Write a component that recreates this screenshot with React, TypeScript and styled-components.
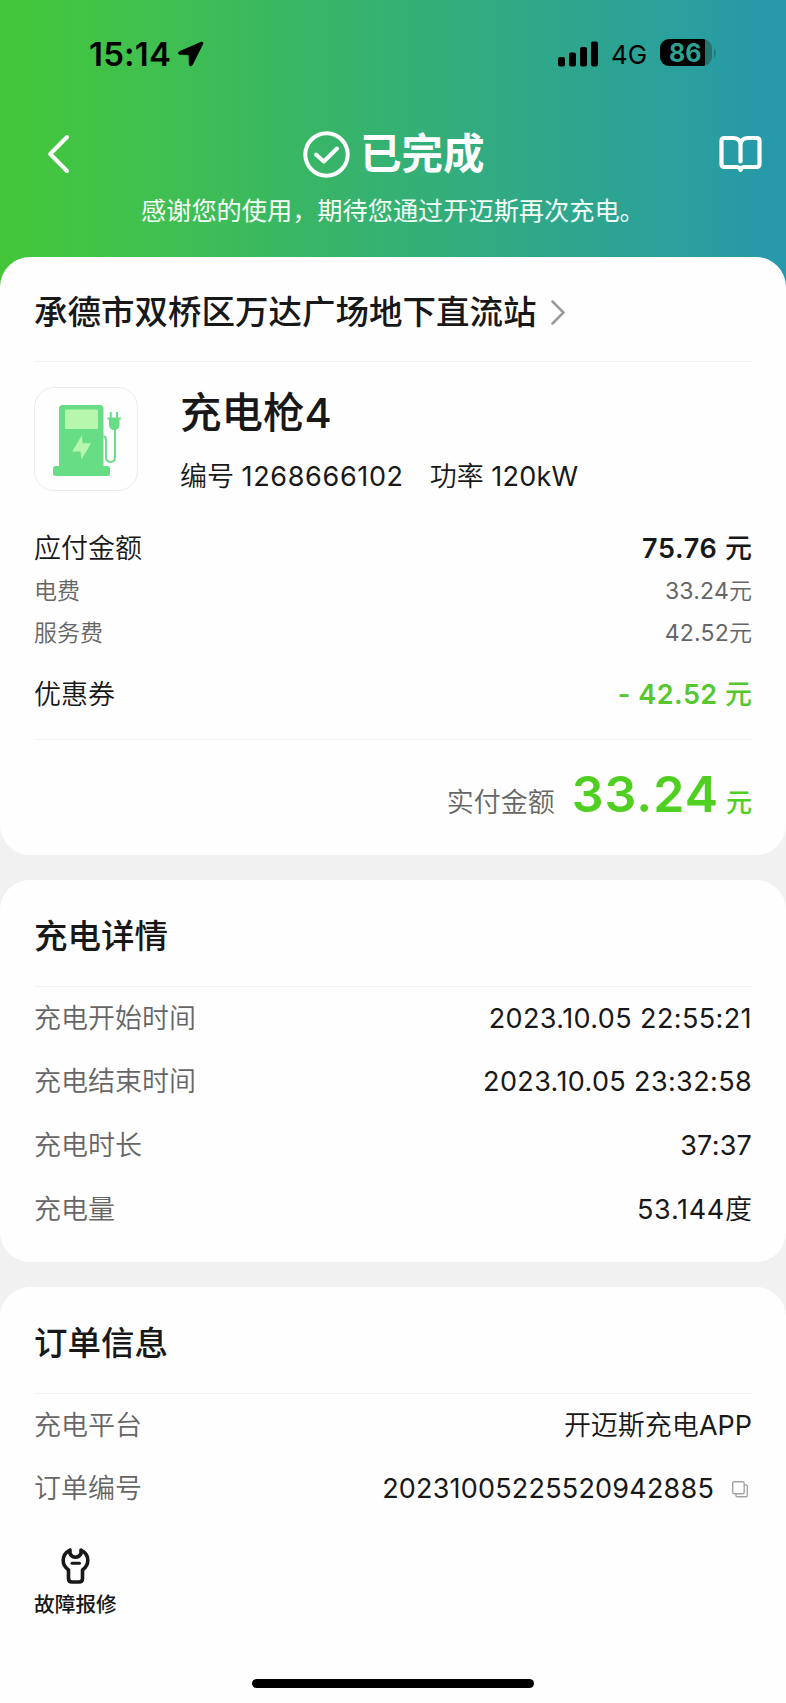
import React from "react";
import styled, { createGlobalStyle } from "styled-components";

const GlobalStyle = createGlobalStyle`
  * { box-sizing: border-box; }
  body {
    margin: 0;
    background: #f1f1f1;
    color: #181818;
    font-family: Inter, "Noto Sans CJK SC", sans-serif;
    font-size: 26px;
  }
  svg { display: block; flex: none; }
`;

const Screen = styled.div`
  width: 786px;
  height: 1703px;
  overflow: hidden;
  display: flex;
  flex-direction: column;
  background: linear-gradient(90deg, #43c738 0%, #40c050 20%, #38b566 40%, #34b075 52%, #2fa78a 70%, #2ba09c 86%, #2598ac 100%) top / 100% 300px no-repeat #f1f1f1;
`;

const StatusBar = styled.div`
  height: 107px;
  padding: 0 68px 0 89px;
  display: flex;
  align-items: center;
  color: #000;
`;

const Clock = styled.span`
  font-size: 33px;
  font-weight: 600;
  line-height: 40px;
  width: 89px;
  letter-spacing: 0.2px;
  white-space: nowrap;
`;

const Network = styled.span`
  margin: 2px 12px 0 12px;
  width: 37px;
  font-size: 26px;
  line-height: 32px;
  white-space: nowrap;
`;

const Signal = styled.svg`
  margin-left: auto;
`;

const Battery = styled.div`
  display: flex;
  align-items: center;
  gap: 2px;
  margin-top: -2px;
`;

const BatteryBody = styled.div`
  width: 52px;
  height: 27px;
  border-radius: 9px;
  background: linear-gradient(90deg, #000 0 45px, #23736f 45px);
  color: #2fa294;
  font-size: 25px;
  font-weight: 700;
  line-height: 29px;
  padding-left: 9px;
`;

const NavBar = styled.div`
  height: 94px;
  padding: 0 24px 0 47px;
  display: grid;
  grid-template-columns: 44px 1fr 44px;
  align-items: center;
`;

const Heading = styled.h1`
  margin: 0;
  display: flex;
  align-items: center;
  gap: 10px;
  padding-left: 212px;
  font-size: 41.5px;
  font-weight: 700;
  line-height: 50px;
  color: #fff;
`;

const Thanks = styled.p`
  margin: 0;
  height: 56px;
  padding: 1px 0 0 141px;
  font-size: 25.2px;
  line-height: 18px;
  color: #f4fff8;
  white-space: nowrap;
`;

const Card = styled.section<{ $height: number; $open?: boolean }>`
  flex: none;
  height: ${(p) => p.$height}px;
  margin-bottom: ${(p) => (p.$open ? 0 : 25)}px;
  padding: 0 34px;
  background: #fefefe;
  border-radius: ${(p) => (p.$open ? "30px 30px 0 0" : "30px")};
  display: flex;
  flex-direction: column;
`;

const CardTitle = styled.h2<{ $height: number }>`
  flex: none;
  margin: 0;
  height: ${(p) => p.$height}px;
  padding-top: 5px;
  border-bottom: 1px solid #f1f1f1;
  display: flex;
  align-items: center;
  gap: 14px;
  font-size: 33.5px;
  font-weight: 500;
  line-height: 48px;
`;

const Device = styled.div`
  flex: none;
  height: 166px;
  padding-top: 25px;
  display: flex;
  align-items: flex-start;
  gap: 42px;
`;

const DeviceIcon = styled.div`
  flex: none;
  width: 104px;
  height: 104px;
  border: 1px solid #ebebeb;
  border-radius: 20px;
`;

const DeviceText = styled.div`
  display: flex;
  flex-direction: column;
  padding-top: 1px;
`;

const DeviceName = styled.div`
  height: 57px;
  font-size: 41.5px;
  font-weight: 500;
  line-height: 50px;
`;

const DeviceMeta = styled.div`
  display: flex;
  gap: 26px;
  font-size: 27px;
  font-weight: 350;
  line-height: 64px;
  white-space: nowrap;
`;

const Figure = styled.span<{ $spacing: number }>`
  font-weight: 400;
  letter-spacing: ${(p) => p.$spacing}px;
`;

const Row = styled.div<{ $height?: number; $small?: boolean }>`
  flex: none;
  height: ${(p) => p.$height || 63.6}px;
  display: flex;
  align-items: center;
  justify-content: space-between;
  font-size: ${(p) => (p.$small ? 23 : 27)}px;
  font-weight: 350;
  line-height: 36px;
  color: ${(p) => (p.$small ? "#666" : "inherit")};
`;

const Label = styled.span<{ $dark?: boolean }>`
  color: ${(p) => (p.$dark ? "#181818" : "#666")};
`;

const Value = styled.span<{ $spacing?: number }>`
  display: flex;
  align-items: center;
  font-weight: 400;
  letter-spacing: ${(p) => p.$spacing ?? 0.2}px;
  white-space: pre;
`;

const Unit = styled.span`
  font-weight: 350;
  letter-spacing: 0;
`;

const Amount = styled.span<{ $green?: boolean }>`
  font-weight: 600;
  letter-spacing: ${(p) => (p.$green ? 0.5 : 0.7)}px;
  color: ${(p) => (p.$green ? "#55c72f" : "#181818")};
  white-space: pre;
`;

const AmountUnit = styled.span`
  font-weight: 500;
  letter-spacing: 0;
`;

const Total = styled.div`
  height: 115px;
  margin-top: 3px;
  border-top: 1px solid #f4f4f4;
  display: flex;
  justify-content: flex-end;
  align-items: baseline;
  padding-top: 24px;
  font-size: 27px;
  font-weight: 350;
  line-height: 60px;
`;

const TotalValue = styled.span`
  margin: 0 7px 0 17px;
  font-size: 50px;
  font-weight: 600;
  letter-spacing: 1px;
  color: #4fd021;
`;

const TotalUnit = styled.span`
  font-size: 26px;
  font-weight: 500;
  color: #4fd021;
`;

const CopyIcon = styled.svg`
  margin: 0 4px 0 18px;
`;

const RepairButton = styled.button`
  align-self: flex-start;
  margin-top: 26px;
  padding: 0;
  border: 0;
  background: none;
  display: flex;
  flex-direction: column;
  align-items: flex-start;
  gap: 5px;
  font: 500 20.7px/30px Inter, "Noto Sans CJK SC", sans-serif;
  color: #181818;

  svg { margin-left: 25px; }
`;

const HomeIndicator = styled.div`
  width: 282px;
  height: 9px;
  margin: auto auto 15px 218px;
  border-radius: 5px;
  background: #000;
`;

const session = [
  { label: "充电开始时间", value: "2023.10.05 22:55:21", spacing: 0.4 },
  { label: "充电结束时间", value: "2023.10.05 23:32:58", spacing: 0.37 },
  { label: "充电时长", value: "37:37", spacing: 0.2 },
  { label: "充电量", value: "53.144", unit: "度", spacing: 0.7 },
];

function ChargerIcon() {
  return (
    <svg width="102" height="102" viewBox="35 388 102 102" fill="none">
      <path d="M59 466V408.500Q59 405 62.500 405H100Q103.500 405 103.500 408.500V466H107.500Q110 466 110 468.500V473.500Q110 476 107.500 476H55.500Q53 476 53 473.500V468.500Q53 466 55.500 466Z" fill="#67de86" />
      <rect x="65" y="409.500" width="33" height="19.500" rx="1.500" fill="#b7f7ad" />
      <path d="M82 435L72.300 451.500H80.500L81.500 459.500L91 443.300H82.500Z" fill="#b7f7ad" />
      <path d="M103.500 436.500Q106 436.500 106 440V457Q106 462 110.500 462Q115 462 115 457V428" stroke="#67de86" strokeWidth="1.900" />
      <path d="M107.500 417.500H109.800V412H111.800V417.500H116V412H118V417.500H120.800V419.500H119.500V425Q119.500 429 115.500 430H113Q109 429 109 425V419.500H107.500Z" fill="#67de86" />
    </svg>
  );
}

export default function App() {
  return (
    <>
      <GlobalStyle />
      <Screen>
        <StatusBar>
          <Clock>15:14</Clock>
          <svg width="26" height="26" viewBox="0 0 26 26">
            <path d="M23.200 1.200L1.500 10.600C-.3 11.400.1 13.200 2 13.300L11 13.800L11.300 23.200C11.400 25.200 13.500 25.500 14.400 23.700L24.800 2.800C25.300 1.500 24.500.7 23.200 1.200Z" fill="#000" stroke="#000" strokeWidth="0.800" />
          </svg>
          <Signal width="41" height="26" viewBox="0 0 41 26">
            <rect x="0" y="16" width="7" height="9.500" rx="2" />
            <rect x="11" y="11.500" width="7" height="14" rx="2" />
            <rect x="22" y="6" width="7" height="19.500" rx="2" />
            <rect x="33" y="0.500" width="7" height="25" rx="2" />
          </Signal>
          <Network>4G</Network>
          <Battery>
            <BatteryBody>86</BatteryBody>
            <svg width="4" height="10" viewBox="0 0 4 10"><path d="M0 0Q4 5 0 10Z" fill="#237d7e" /></svg>
          </Battery>
        </StatusBar>

        <NavBar>
          <svg width="23" height="40" viewBox="0 0 23 40" fill="none" stroke="#fff" strokeWidth="4" strokeLinecap="round" strokeLinejoin="round">
            <path d="M20 3L3.200 20L20 37" />
          </svg>
          <Heading>
            <svg width="47" height="47" viewBox="0 0 47 47" fill="none" stroke="#fff" strokeWidth="4" strokeLinecap="round" strokeLinejoin="round">
              <circle cx="23.500" cy="23.500" r="21.200" />
              <path d="M13 23.500L20.800 30.500L34 17.500" />
            </svg>
            已完成
          </Heading>
          <svg width="44" height="38" viewBox="0 0 44 38" fill="none" stroke="#fff" strokeWidth="4.200" strokeLinecap="round" strokeLinejoin="round">
            <path d="M22.500 26.500V9Q21.500 3 15 3H6.500Q3.500 3 3.500 6V29Q3.500 32 6.500 32H18.500Q22 32 22.500 35Q23 32 26.500 32H38.500Q41.500 32 41.500 29V6Q41.500 3 38.500 3H30Q23.500 3 22.500 9" />
          </svg>
        </NavBar>
        <Thanks>感谢您的使用，期待您通过开迈斯再次充电。</Thanks>

        <Card $height={598}>
          <CardTitle $height={105}>
            承德市双桥区万达广场地下直流站
            <svg width="14" height="26" viewBox="0 0 14 26" fill="none" stroke="#999" strokeWidth="2.500" strokeLinecap="round">
              <path d="M1.500 2.500L12.500 13.500L1.500 24.500" />
            </svg>
          </CardTitle>
          <Device>
            <DeviceIcon><ChargerIcon /></DeviceIcon>
            <DeviceText>
              <DeviceName>充电枪4</DeviceName>
              <DeviceMeta>
                <span>编号 <Figure $spacing={0.65}>1268666102</Figure></span>
                <span>功率 <Figure $spacing={0.2}>120kW</Figure></span>
              </DeviceMeta>
            </DeviceText>
          </Device>
          <Row $height={42.5}><Label $dark>应付金额</Label><Amount>75.76 <AmountUnit>元</AmountUnit></Amount></Row>
          <Row $height={41} $small><span>电费</span><Value>33.24<Unit>元</Unit></Value></Row>
          <Row $height={42} $small><span>服务费</span><Value>42.52<Unit>元</Unit></Value></Row>
          <Row $height={82}><Label $dark>优惠券</Label><Amount $green>- 42.52 <AmountUnit>元</AmountUnit></Amount></Row>
          <Total>
            <Label>实付金额</Label>
            <TotalValue>33.24</TotalValue>
            <TotalUnit>元</TotalUnit>
          </Total>
        </Card>

        <Card $height={382}>
          <CardTitle $height={107}>充电详情</CardTitle>
          {session.map((item) => (
            <Row key={item.label}>
              <Label>{item.label}</Label>
              <Value $spacing={item.spacing}>{item.value}{item.unit && <Unit>{item.unit}</Unit>}</Value>
            </Row>
          ))}
        </Card>

        <Card $height={416} $open>
          <CardTitle $height={107}>订单信息</CardTitle>
          <Row $height={63.5}><Label>充电平台</Label><Value $spacing={0}><Unit>开迈斯充电</Unit>APP</Value></Row>
          <Row $height={63.5}>
            <Label>订单编号</Label>
            <Value>
              20231005225520942885
              <CopyIcon width="16" height="17" viewBox="0 0 16 17" fill="none" stroke="#a4a4a4" strokeWidth="1.400">
                <rect x="0.700" y="0.700" width="11.500" height="12" rx="1.500" />
                <path d="M12.500 4H14Q15.300 4 15.300 5.300V14.500Q15.300 15.800 14 15.800H5.300Q4 15.800 4 14.500V13" />
              </CopyIcon>
            </Value>
          </Row>
          <RepairButton>
            <svg width="32" height="38" viewBox="0 0 32 38" fill="none" stroke="#181818" strokeWidth="3.600" strokeLinecap="round" strokeLinejoin="round">
              <path d="M11 3V6.500Q12.500 10.200 16.500 10.200Q20.500 10.200 22 6.500V3Q28.800 6.500 28.800 13.500Q28.800 19 23.500 23V31.500Q23.500 35 20 35H13Q9.500 35 9.500 31.500V23Q4.200 19 4.200 13.500Q4.200 6.500 11 3Z" />
              <path d="M13 16.200H20.500" strokeWidth="3" />
            </svg>
            故障报修
          </RepairButton>
          <HomeIndicator />
        </Card>
      </Screen>
    </>
  );
}
